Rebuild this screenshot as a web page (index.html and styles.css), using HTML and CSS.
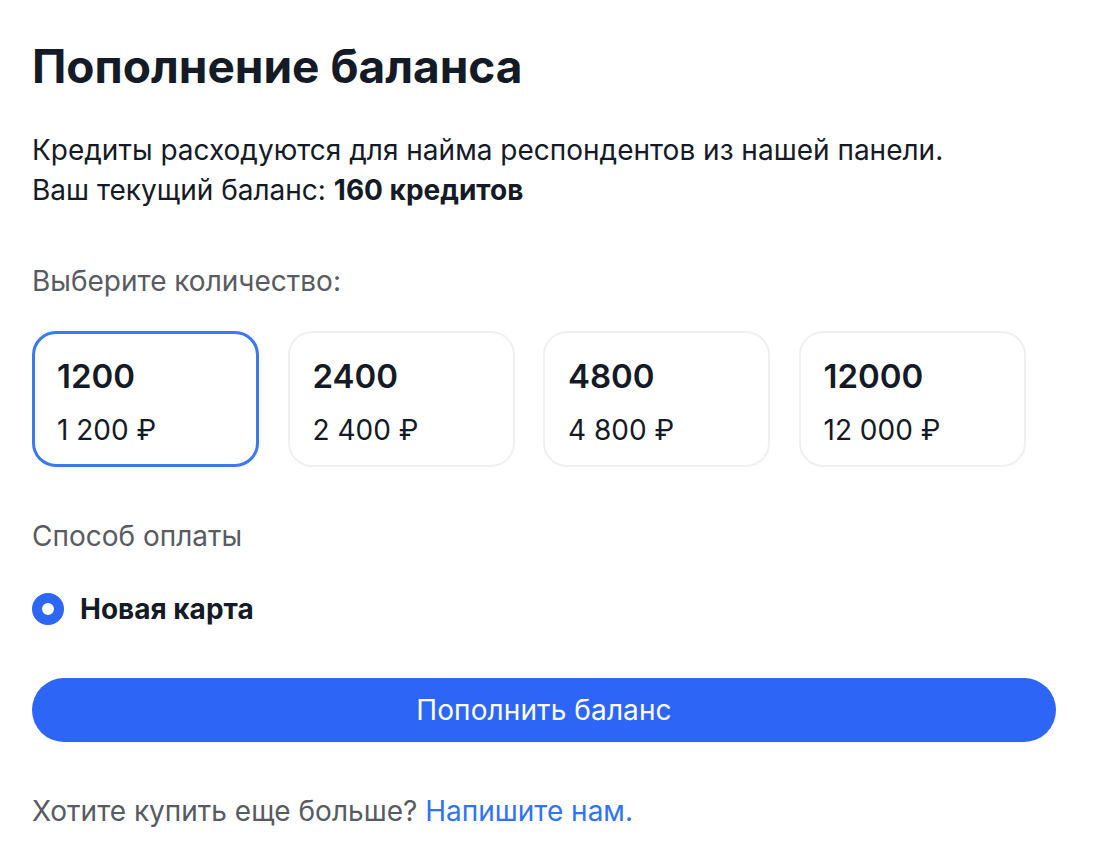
FILE: index.html
```html
<!DOCTYPE html>
<html lang="ru">

<head>
    <meta charset="UTF-8">
    <title>Пополнение баланса</title>
    <link rel="stylesheet" href="styles.css">
</head>

<body>

    <div class="topup">
        <h1>Пополнение баланса</h1>
        <p class="intro">
            Кредиты расходуются для найма респондентов из нашей панели.<br>
            Ваш текущий баланс: <b>160 кредитов</b>
        </p>

        <div class="label">Выберите количество:</div>
        <div class="packs">
            <div class="pack selected">
                <div class="credits">1200</div>
                <div class="price">1 200 ₽</div>
            </div>
            <div class="pack">
                <div class="credits">2400</div>
                <div class="price">2 400 ₽</div>
            </div>
            <div class="pack">
                <div class="credits">4800</div>
                <div class="price">4 800 ₽</div>
            </div>
            <div class="pack">
                <div class="credits">12000</div>
                <div class="price">12 000 ₽</div>
            </div>
        </div>

        <div class="label label-pay">Способ оплаты</div>
        <label class="method">
            <span class="radio"></span>
            Новая карта
        </label>

        <button type="button">Пополнить баланс</button>

        <p class="more">Хотите купить еще больше? <a href="#">Напишите нам.</a></p>
    </div>

</body>

</html>
```

FILE: styles.css
```css
body {
    margin: 0;
    font-family: Inter, 'Noto Sans', sans-serif;
    color: #141a26;
    background: #fff;
}

.topup {
    padding: 38px 38px 0 32px;
}

h1 {
    margin: 0;
    font-size: 46px;
    font-weight: 700;
    line-height: 56px;
}

.intro {
    margin: 36px 0 0;
    font-size: 28px;
    line-height: 40px;
}

.intro b {
    font-weight: 700;
}

.label {
    margin-top: 53px;
    font-size: 28px;
    line-height: 36px;
    color: #585b62;
}

.packs {
    display: flex;
    gap: 28.5px;
    margin-top: 32px;
}

.pack {
    box-sizing: border-box;
    width: 227px;
    height: 136px;
    padding: 21px 23px;
    border: 2px solid #f0f0f2;
    border-radius: 24px;
}

.pack.selected {
    border: 3px solid #3b78f2;
    padding: 20px 22px;
}

.credits {
    font-size: 33px;
    font-weight: 600;
    line-height: 44px;
}

.price {
    margin-top: 14px;
    font-size: 28px;
    line-height: 36px;
}

.label-pay {
    margin-top: 51px;
}

.method {
    display: flex;
    align-items: center;
    gap: 16px;
    margin-top: 37px;
    font-size: 28px;
    font-weight: 700;
    line-height: 36px;
}

.radio {
    box-sizing: border-box;
    width: 32px;
    height: 32px;
    border-radius: 50%;
    border: 10px solid #2e67f6;
    background: #fff;
}

button {
    display: block;
    width: 100%;
    height: 64px;
    margin-top: 51px;
    border: none;
    border-radius: 32px;
    background-color: #2d66f6;
    color: #fff;
    font-family: inherit;
    font-size: 28px;
    letter-spacing: 0.1px;
    cursor: pointer;
}

.more {
    margin: 51px 0 0;
    font-size: 28px;
    line-height: 36px;
    color: #585b62;
}

a {
    color: #3074f5;
    text-decoration: none;
}
```
